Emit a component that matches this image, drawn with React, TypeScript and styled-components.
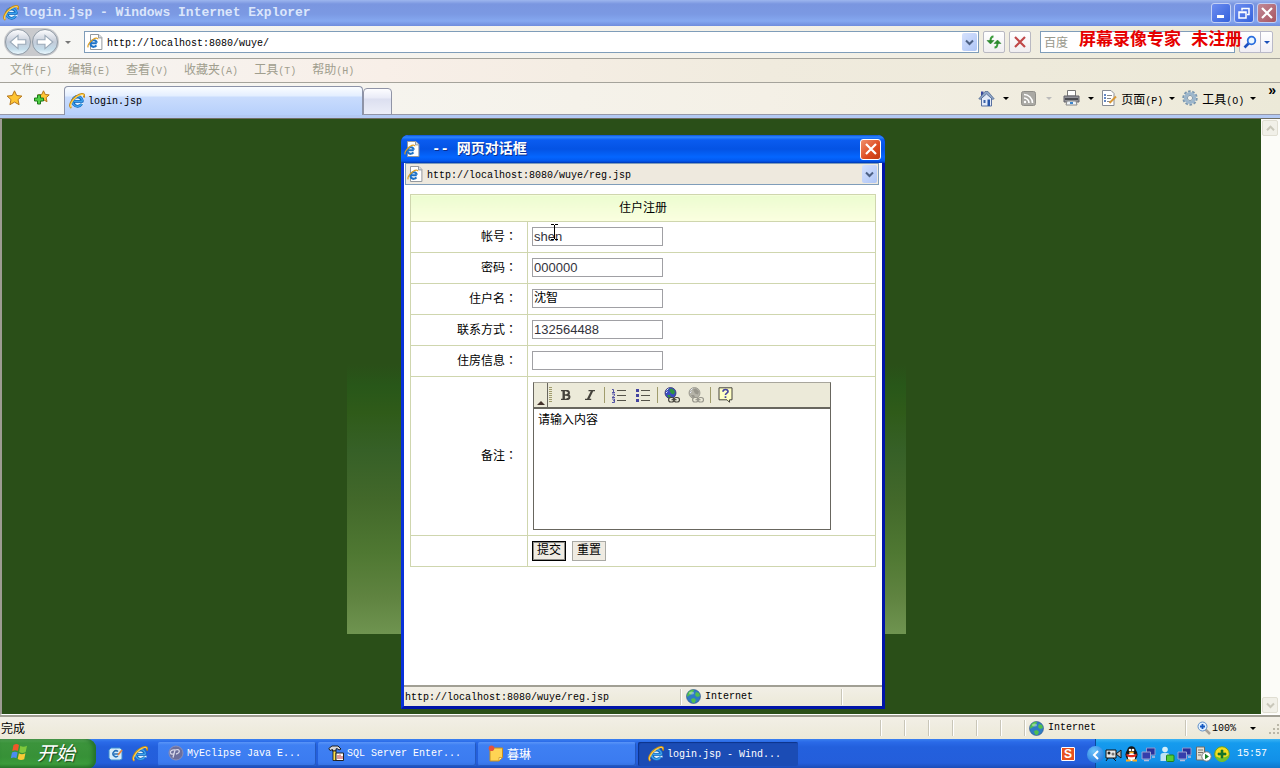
import React from "react";
import styled, { createGlobalStyle, css } from "styled-components";

const CJK = '"Noto Sans CJK SC", sans-serif';
const MONO = '"Liberation Mono", "Noto Sans CJK SC", monospace';

const GlobalStyle = createGlobalStyle`
  * { box-sizing: border-box; }
  body { margin: 0; font-family: ${CJK}; font-size: 12px; line-height: 16px; color: #000; }
  button, input, textarea { font-family: inherit; font-size: inherit; margin: 0; border-radius: 0; }
  button { padding: 0; border: 0; background: none; color: inherit; cursor: default; }
  a { color: inherit; text-decoration: none; }
  svg { display: block; flex: none; }
`;

/* ---------- shared parts ---------- */

const Latin = styled.span`
  font-family: ${MONO};
  font-size: 10px;
  white-space: nowrap;
`;

const Desktop = styled.div`
  display: flex;
  flex-direction: column;
  min-height: 100vh;
  background: #ece9d8;
`;

const TriangleDown = styled.span<{ $color?: string }>`
  flex: none;
  width: 0;
  height: 0;
  border: 3px solid transparent;
  border-top-color: ${(p) => p.$color ?? "#000"};
  border-bottom: 0;
`;

/* ---------- browser window ---------- */

const TitleBar = styled.header`
  display: flex;
  align-items: center;
  gap: 3px;
  height: 26px;
  padding: 0 3px;
  color: #dbe6fb;
  background: linear-gradient(#9db6ee 0, #7a96e0 4px, #7b99e3 14px, #85a8f0 21px, #6f8cdd 26px);
`;

const WindowTitle = styled.h1`
  flex: 1;
  margin: 0;
  font: bold 13px/16px ${MONO};
`;

const WindowButtons = styled.div`
  display: flex;
  gap: 3px;
`;

const WindowButton = styled.button<{ $kind?: "close" | "dialogClose" }>`
  display: grid;
  place-items: center;
  width: 20px;
  height: 20px;
  border: 1px solid #c3d0f5;
  border-radius: 3px;
  background: linear-gradient(135deg, #6d8df0, #3462dc);
  ${(p) =>
    p.$kind === "close" &&
    css`
      background: linear-gradient(135deg, #c18a97, #a85560);
    `}
  ${(p) =>
    p.$kind === "dialogClose" &&
    css`
      width: 21px;
      height: 21px;
      border-color: #fff;
      background: linear-gradient(135deg, #f0906c, #dd4a20 60%, #c23a12);
    `}
`;

const AddressRow = styled.div`
  display: flex;
  align-items: center;
  height: 33px;
  padding: 0 7px 0 4px;
  border-bottom: 1px solid #a5a39b;
  background: linear-gradient(90deg, #f6f6f4, #f4f1e8 60%, #ece9d8);
`;

const History = styled.nav`
  display: flex;
  align-items: center;
  gap: 6px;
  width: 80px;
`;

const HistoryButtons = styled.div`
  display: flex;
  gap: 1px;
  padding: 1px;
  border-radius: 14px;
  background: #c9cacd;
`;

const HistoryButton = styled.button`
  display: grid;
  place-items: center;
  width: 26px;
  height: 26px;
  border: 1px solid #8f9aa5;
  border-radius: 50%;
  background: linear-gradient(#fdfdfe, #c3cbd8 50%, #c4dcea 80%, #eefaff);
`;

const AddressBox = styled.div`
  display: flex;
  flex: 1;
  align-items: center;
  gap: 4px;
  height: 22px;
  padding: 1px 1px 1px 2px;
  border: 1px solid #7f9db9;
  background: #fff;
`;

const AddressInput = styled.input`
  flex: 1;
  min-width: 0;
  padding: 3px 0 0;
  border: 0;
  outline: 0;
  background: transparent;
  font: 10px/16px ${MONO};
`;

const DropButton = styled.button`
  display: grid;
  place-items: center;
  flex: none;
  width: 15px;
  height: 18px;
  border-radius: 2px;
  background: linear-gradient(135deg, #d5e1fd, #aec5f6);
`;

const ToolButton = styled.button<{ $gap: number }>`
  display: grid;
  place-items: center;
  width: 22px;
  height: 22px;
  margin-left: ${(p) => p.$gap}px;
  border: 1px solid #b9b9c2;
  border-radius: 2px;
  background: linear-gradient(#fff, #f0eef0);
`;

const SearchArea = styled.form`
  position: relative;
  display: flex;
  gap: 4px;
  margin-left: 9px;
`;

const SearchInput = styled.input`
  width: 195px;
  height: 22px;
  padding: 0 3px 2px;
  border: 1px solid #7f9db9;
  outline: 0;
  font-size: 12px;
  background: #fff;
  &::placeholder { color: #98988c; opacity: 1; }
`;

const SearchButtons = styled.div`
  display: flex;
  border: 1px solid #b9b9c8;
  border-radius: 2px;
  background: linear-gradient(#fff, #f0eef4);
`;

const SearchPart = styled.button<{ $w: number }>`
  display: grid;
  place-items: center;
  width: ${(p) => p.$w}px;
  & + & { border-left: 1px solid #b9b9c8; }
`;

const Watermark = styled.strong`
  position: absolute;
  top: 0;
  left: 39px;
  color: #e60000;
  font: bold 17px/20px ${MONO};
  white-space: nowrap;
  pointer-events: none;
`;

const MenuBar = styled.nav`
  display: flex;
  align-items: center;
  gap: 16px;
  height: 24px;
  padding-left: 10px;
  border-bottom: 1px solid #a5a39b;
  color: #a09e8e;
  background: linear-gradient(90deg, #f6f5f3, #f8efe8 30%, #f0ebde 60%, #ece9d8);
`;

const TabRow = styled.div`
  display: flex;
  align-items: flex-end;
  height: 32px;
  padding-right: 4px;
  background: linear-gradient(90deg, #f8f8f6, #f4f0e6 60%, #ece9d8);
  box-shadow: inset 0 -1px #9698a8;
`;

const Favorites = styled.div`
  display: flex;
  align-items: flex-start;
  gap: 10px;
  width: 64px;
  height: 32px;
  padding: 7px 0 0 6px;
`;

const Tab = styled.button`
  display: flex;
  align-items: center;
  gap: 3px;
  width: 299px;
  height: 29px;
  padding-left: 4px;
  border: 1px solid #8c93a8;
  border-bottom: 0;
  border-radius: 4px 4px 0 0;
  background: linear-gradient(#fbfdff 0, #e3eeff 9px, #c9dcfd 10px, #b7d0fb 100%);
`;

const NewTab = styled.button`
  width: 29px;
  height: 27px;
  border: 1px solid #9094a6;
  border-radius: 4px 4px 0 0;
  background: linear-gradient(#fdfdff, #e9ebf7 9px, #dcdff0 10px, #eceef8);
`;

const CommandBar = styled.div`
  display: flex;
  align-items: center;
  align-self: stretch;
  margin-left: auto;
`;

const Command = styled.button<{ $gap?: number; $after?: number }>`
  display: flex;
  align-items: center;
  gap: ${(p) => p.$gap ?? 8}px;
  margin-right: ${(p) => p.$after ?? 7}px;
  padding-bottom: 2px;
`;

const CommandName = styled.span`
  margin-right: 2px;
`;

const Overflow = styled.button`
  align-self: flex-start;
  margin-left: 4px;
  font: bold 14px/14px "Liberation Sans", sans-serif;
`;

const Strip = styled.div`
  height: 4px;
  border-bottom: 1px solid #716f64;
  background: #b3c9f3;
`;

/* ---------- page behind the dialog ---------- */

const Content = styled.main`
  position: relative;
  display: flex;
  flex: 1;
  border-left: 2px solid #9d9b92;
  border-bottom: 1px solid #fff;
  background: #2a4f18;
`;

const PageArea = styled.section`
  display: flex;
  flex: 1;
  justify-content: center;
  align-items: flex-start;
  padding: 245px 10px 80px 0;
`;

const Banner = styled.div`
  width: 559px;
  height: 270px;
  background: linear-gradient(#2a4f18, #285719 8%, #2f5b19 18%, #366027 32%, #42682a 50%, #4f7832 70%, #5f8340 86%, #6f9450);
`;

const ScrollBar = styled.div`
  display: flex;
  flex-direction: column;
  justify-content: space-between;
  width: 19px;
  padding: 1px 2px 1px 1px;
  background: #fcfcf8;
`;

const ScrollButton = styled.button`
  display: grid;
  place-items: center;
  width: 16px;
  height: 16px;
  border: 1px solid #e0ded2;
  border-radius: 2px;
  background: #f1f0e8;
`;

/* ---------- dialog ---------- */

const Dialog = styled.section`
  position: absolute;
  top: 16px;
  left: 399px;
  display: flex;
  flex-direction: column;
  width: 484px;
  border: solid #0831d9;
  border-width: 0 3px 3px;
  border-right-color: #0014a8;
  border-bottom-color: #0014a8;
  border-radius: 7px 7px 0 0;
  background: #fff;
`;

const DialogTitle = styled.header`
  display: flex;
  align-items: center;
  height: 28px;
  margin: 0 -3px;
  padding: 0 4px 0 3px;
  border-radius: 7px 7px 0 0;
  color: #fff;
  background: linear-gradient(#0a52d8 0, #2d86ff 2px, #0a5cf0 5px, #0453e4 14px, #0466ff 22px, #0358ee 26px, #0036b0 28px);
`;

const DialogName = styled.h2`
  display: flex;
  flex: 1;
  gap: 8px;
  margin: 0 0 0 12px;
  font: bold 14px/16px ${MONO};
  text-shadow: 1px 1px #0a2f8f;
`;

const DialogAddress = styled(AddressBox)`
  flex: none;
  margin: 0 3px 0 1px;
  padding: 1px;
  background: #eee9de;
`;

const DialogBody = styled.div`
  min-height: 500px;
  padding: 9px 6px 0;
`;

const FormTable = styled.table`
  width: 100%;
  border-collapse: collapse;
  th, td { border: 1px solid #cfd6ae; padding: 0; font-weight: normal; }
  th { padding-bottom: 3px; }
`;

const Caption = styled.th`
  height: 27px;
  background: linear-gradient(#ecfcd0, #fbffe0);
`;

const Row = styled.tr<{ $h: number }>`
  height: ${(p) => p.$h}px;
`;

const LabelCell = styled.th`
  width: 117px;
  text-align: right;
  label { margin-right: 10px; }
`;

const Colon = styled.span`
  font-family: "Noto Sans CJK TC", sans-serif;
`;

const FieldCell = styled.td<{ $raised?: boolean }>`
  position: relative;
  && {
    padding-left: 4px;
    padding-bottom: ${(p) => (p.$raised ? 2 : 0)}px;
  }
`;

const Field = styled.input<{ $cjk?: boolean }>`
  display: block;
  width: 131px;
  height: 19px;
  padding: 0 1px;
  border: 1px solid #a0a0a4;
  outline: 0;
  color: #33333c;
  font: 13px/17px "Liberation Sans", sans-serif;
  ${(p) =>
    p.$cjk &&
    css`
      padding-bottom: 4px;
      font: 12px/13px ${CJK};
      color: #000;
    `}
`;

const Caret = styled.svg`
  position: absolute;
  top: 2px;
  left: 23px;
`;

const Editor = styled.div`
  width: 298px;
  margin-left: 1px;
  border: 1px solid #68665e;
  border-top-color: #a8a69c;
`;

const EditorBar = styled.div`
  display: flex;
  align-items: center;
  height: 26px;
  border-bottom: 2px solid #68665e;
  background: #ecead9;
`;

const Expand = styled.button`
  display: flex;
  align-items: flex-end;
  justify-content: center;
  width: 14px;
  height: 24px;
  padding-bottom: 2px;
  border-right: 1px solid #68665e;
`;

const Grip = styled.span`
  width: 3px;
  height: 16px;
  margin: 0 2px 0 1px;
  background: repeating-linear-gradient(#a09c6c 0 1px, transparent 1px 2px);
`;

const EditorTool = styled.button`
  display: grid;
  place-items: center;
  width: 24px;
  height: 22px;
`;

const Divider = styled.span`
  width: 1px;
  height: 16px;
  margin: 0 2px;
  background: #a09c6c;
`;

const EditorText = styled.textarea`
  display: block;
  width: 100%;
  height: 120px;
  padding: 2px 4px;
  border: 0;
  outline: 0;
  resize: none;
  font: 12px/16px ${CJK};
`;

const Actions = styled.div`
  display: flex;
  gap: 6px;
`;

const FormButton = styled.button<{ $primary?: boolean }>`
  display: flex;
  justify-content: center;
  align-items: flex-start;
  width: 34px;
  height: 20px;
  border: 1px solid #a9a9a4;
  background: #efebe2;
  font-size: 12px;
  line-height: 14px;
  ${(p) =>
    p.$primary &&
    css`
      border-color: #000;
      box-shadow: inset 0 0 0 1px #8d8d88;
    `}
`;

/* ---------- status bars ---------- */

const StatusBar = styled.footer<{ $h: number }>`
  display: flex;
  align-items: center;
  height: ${(p) => p.$h}px;
  border-top: 2px solid #a19f94;
  background: linear-gradient(#f2efe6, #ece9d8);
`;

const StatusText = styled.div`
  flex: 1;
  padding-left: 1px;
`;

const StatusCell = styled.div<{ $w: number; $pad?: number }>`
  display: flex;
  align-items: center;
  gap: 4px;
  width: ${(p) => p.$w}px;
  height: 16px;
  padding-left: ${(p) => p.$pad ?? 0}px;
  border-left: 1px solid #c9c6b8;
  box-shadow: inset 1px 0 #fff;
`;

const Zoom = styled.button`
  display: flex;
  align-items: center;
  gap: 1px;
  margin-right: 10px;
`;

/* ---------- task bar ---------- */

const TaskBar = styled.nav`
  display: flex;
  height: 30px;
  background: linear-gradient(#3a80f0 0, #2a6ae8 3px, #2360dd 8px, #245edb 24px, #1a48b0 30px);
`;

const Start = styled.button`
  display: flex;
  align-items: center;
  gap: 8px;
  width: 96px;
  padding: 0 0 4px 10px;
  border-radius: 0 9px 9px 0;
  color: #fff;
  font: italic 19px/24px ${CJK};
  text-shadow: 1px 1px 1px #1c4a1c;
  background: linear-gradient(#5fae5f 0, #3c943c 4px, #379137 18px, #3b9b3b 25px, #267026 30px);
  box-shadow: inset -3px 0 4px #23702a;
`;

const QuickLaunch = styled.div`
  display: flex;
  align-items: center;
  gap: 8px;
  width: 62px;
  padding-left: 12px;
`;

const Tasks = styled.div`
  display: flex;
  flex: 1;
  gap: 2px;
  padding: 3px 0;
`;

const Task = styled.button<{ $active?: boolean }>`
  display: flex;
  align-items: center;
  gap: 3px;
  flex: 0 1 158px;
  min-width: 0;
  padding: 0 0 2px 10px;
  border-radius: 2px;
  color: #fff;
  background: linear-gradient(#5a95f8 0, #3f80f3 3px, #3b7bf0 20px, #3470e0);
  box-shadow: inset -1px -1px #2459c0;
  ${(p) =>
    p.$active &&
    css`
      flex-basis: 160px;
      padding-bottom: 0;
      background: #1b4cb5;
      box-shadow: inset 1px 1px 1px #0d338a;
    `}
`;

const InputMethod = styled.button`
  display: grid;
  place-items: center;
  width: 14px;
  height: 14px;
  margin: 8px 20px 0 0;
  border: 1px solid #fff;
  border-radius: 1px;
  color: #fff;
  background: #e8511f;
  font: bold 12px/12px "Liberation Sans", sans-serif;
`;

const Tray = styled.div`
  position: relative;
  display: flex;
  align-items: center;
  gap: 2px;
  width: 185px;
  padding-left: 9px;
  border-left: 1px solid #0a4a9c;
  color: #fff;
  background: linear-gradient(#3cb4f4 0, #159bee 4px, #1290e8 22px, #0f74c8 30px);
`;

const TrayToggle = styled.button`
  position: absolute;
  top: 7px;
  left: -9px;
  display: grid;
  place-items: center;
  width: 17px;
  height: 17px;
  border-radius: 50%;
  background: radial-gradient(circle at 40% 30%, #6cc4fa, #1668d8);
`;

const Clock = styled.time`
  margin-left: 5px;
  font: 10px/16px ${MONO};
`;

/* ---------- drawings ---------- */

const IeLogo = ({ size = 16 }: { size?: number }) => (
  <svg width={size} height={size} viewBox="0 0 16 16" fill="none">
    <circle cx="8.500" cy="8.300" r="6" fill="#1668bc" />
    <path d="M6 7c.6-2 4.400-2 5 0zM6 9.800h8.500v1.700h-4c-1.500 1-4.200.5-4.500-1.700z" fill="#e4f2fc" />
    <path d="M13.400 8.300H5M12.800 10.900A5 5 0 1 1 13.500 8.300" stroke="#1b6fc4" strokeWidth="2.600" />
    <path d="M13.400 8.300H5M12.800 10.900A5 5 0 1 1 13.500 8.300" stroke="#3fa5ee" strokeWidth="1.300" />
    <path d="M2.400 14.800C-.8 13.200 2 7 7.400 3.200 11.400.4 15.200.2 15.200 2.600c0 .8-.2 1.300-.5 1.900" stroke="#c58a16" strokeWidth="1.900" />
    <path d="M2.300 14.300C.2 12.700 2.900 7.200 7.700 3.700 11.400 1 14.500.8 14.800 2.700" stroke="#ffd14f" strokeWidth="1.200" />
  </svg>
);

const IePage = () => (
  <svg width="16" height="16" viewBox="0 0 16 16" fill="none">
    <path d="M3.500.5h8.400l3 3v12H3.500z" fill="#fff" stroke="#94999e" />
    <path d="M11.500.5v3.400h3.400" fill="#dfe3e6" stroke="#94999e" />
    <path d="M9.800 9.300H4.400M9.400 11.400a3.300 3.300 0 1 1 .5-2.600" stroke="#1d72c8" strokeWidth="2.100" />
    <path d="M1.300 13.400C0 12 2.400 7.800 6 5.400c2.600-1.700 4.900-1.700 4.800-.2" stroke="#e0a020" strokeWidth="1.200" />
  </svg>
);

const Chevron = ({ up, color = "#4d6185" }: { up?: boolean; color?: string }) => (
  <svg width="9" height="7" viewBox="0 0 9 7" fill="none" stroke={color} strokeWidth="2">
    <path d={up ? "M1 5.200 4.500 1.700 8 5.200" : "M1 1.500 4.500 5 8 1.500"} />
  </svg>
);

const Arrow = ({ right }: { right?: boolean }) => (
  <svg width="20" height="18" viewBox="0 0 18 16">
    <path
      d={right ? "M9 2l7 6-7 6v-4H2V6h7z" : "M9 2 2 8l7 6v-4h7V6H9z"}
      fill="#fff"
      stroke="#9aa9b8"
      strokeWidth="1"
    />
  </svg>
);

const Cross = ({ color, size = 14 }: { color: string; size?: number }) => (
  <svg width={size} height={size} viewBox="0 0 14 14" stroke={color} strokeWidth="2.2">
    <path d="M2 2l10 10M12 2 2 12" />
  </svg>
);

const Refresh = () => (
  <svg width="16" height="16" viewBox="0 0 16 16" fill="none">
    <path d="M7.500 2.500C5.500 2.500 4.500 4 4.500 7M8.500 13.500c2 0 3-1.500 3-4.500" stroke="#3a9a3a" strokeWidth="2" />
    <path d="M1 6.500h7L4.500 10zM8 9.500h7L11.500 6z" fill="#2c8c2c" stroke="#1f7a24" strokeWidth=".5" />
  </svg>
);

const Lens = ({ plus }: { plus?: boolean }) => (
  <svg width="14" height="14" viewBox="0 0 14 14" fill="none">
    {plus ? (
      <>
        <path d="M8 8l5 5" stroke="#a9a39a" strokeWidth="2.5" />
        <circle cx="5.500" cy="5.500" r="4.500" fill="#e0f0ff" stroke="#5f8fc8" />
        <path d="M5.500 3v5M3 5.500h5" stroke="#1458c0" strokeWidth="1.800" />
      </>
    ) : (
      <>
        <path d="M6 8 1.500 12.500" stroke="#1c50c0" strokeWidth="2.600" />
        <circle cx="8.500" cy="5.500" r="3.800" fill="#eaf6ff" stroke="#2a6ede" strokeWidth="1.800" />
      </>
    )}
  </svg>
);

const Star = ({ add }: { add?: boolean }) => (
  <svg width="17" height="16" viewBox="0 0 17 16">
    <path
      d={add ? "M10.500.8l1.700 3.600 4 .5-3 2.800.8 4-3.500-2-3.500 2 .8-4-3-2.800 4-.5z" : "M8.500.8l2.200 4.700 5.200.6-3.900 3.500 1.100 5.100-4.600-2.600-4.600 2.600L5 9.600 1.100 6.100l5.200-.6z"}
      fill="#ffc533"
      stroke="#b5761c"
    />
    {add && <path d="M4.500 5h3v3h3v3h-3v3h-3v-3h-3V8h3z" fill="#4fd044" stroke="#1f7a1c" />}
  </svg>
);

const Home = () => (
  <svg width="17" height="17" viewBox="0 0 17 17">
    <path d="M3 1.500h2.500V7H3z" fill="#3848a0" />
    <path d="M3.500 8l5-5.500L13.500 8v8h-10z" fill="#e4ebf8" stroke="#5870a0" />
    <path d="M.8 8.800 7 1.500h3l6.200 7.300-1.500.6L8.500 4 2.300 9.400z" fill="#8fa5c8" stroke="#4a648c" strokeWidth=".7" />
    <path d="M5.500 10h2v3h-2z" fill="#3b62a8" />
    <path d="M9.500 9.500h2.500V16H9.500z" fill="#2856a8" />
  </svg>
);

const Feed = () => (
  <svg width="15" height="15" viewBox="0 0 15 15" fill="none">
    <rect x=".5" y=".5" width="14" height="14" rx="2" fill="#aaa9a4" stroke="#8f8e89" />
    <path d="M3 7a5 5 0 0 1 5 5M3 3.500A8.500 8.500 0 0 1 11.500 12" stroke="#fff" strokeWidth="1.600" />
    <circle cx="4" cy="11" r="1.200" fill="#fff" />
  </svg>
);

const Printer = () => (
  <svg width="17" height="16" viewBox="0 0 17 16">
    <path d="M4.500.5h8V6h-8z" fill="#fff" stroke="#777" />
    <path d="M1 6h15v6H1z" fill="#92939a" stroke="#62636a" />
    <path d="M2 8h13v2H2z" fill="#4b4c52" />
    <path d="M4 11h9l1 4H3z" fill="#eef4fa" stroke="#888" />
    <path d="M7 12h3v2H7z" fill="#3c86cc" />
  </svg>
);

const PageIcon = () => (
  <svg width="16" height="16" viewBox="0 0 16 16" fill="none">
    <path d="M1.500.5h8.500l3 3v12H1.500z" fill="#fff" stroke="#888c94" />
    <path d="M3 5h2M3 8h2M3 11h2" stroke="#3060b0" strokeWidth="1.500" />
    <path d="M6 5.500h5M6 8.500h4M6 11.500h3" stroke="#888" />
    <path d="M8.500 13 15 6.500" stroke="#d89838" strokeWidth="2" />
  </svg>
);

const Gear = () => (
  <svg width="16" height="16" viewBox="0 0 16 16" fill="none">
    <circle cx="8" cy="8" r="6.700" stroke="#7a97b0" strokeWidth="2" strokeDasharray="2.600 1.600" />
    <circle cx="8" cy="8" r="4.500" stroke="#9cb6cc" strokeWidth="3.200" />
    <circle cx="8" cy="8" r="2.600" fill="#f3f0e8" stroke="#6888a4" strokeWidth=".8" />
  </svg>
);

const Globe = () => (
  <svg width="15" height="15" viewBox="0 0 15 15">
    <circle cx="7.500" cy="7.500" r="7" fill="#2f7cc4" stroke="#2b4f88" strokeWidth=".6" />
    <path d="M3 2.500C5 .5 7 .5 8 1c0 2-2 2-2.500 4-1 1-2.500 1-4 3C.5 6 1.500 4 3 2.500zM10 3l3 1 1 3-3 1-2-2zM5 10l3-1 2 2-1.500 3L6 13.500z" fill="#52bf4c" />
    <ellipse cx="5.500" cy="4" rx="2.600" ry="1.600" fill="#fff" opacity=".4" />
  </svg>
);

const NumberList = () => (
  <svg width="16" height="15" viewBox="0 0 16 15" fill="none">
    <path d="M6 2.500h9M6 7.500h9M6 12.500h9" stroke="#55534a" />
    <path d="M1 1.500h1.500V4M1 4.500h3M1 6h2.500v1.500L1 9.500h3M1 11h2.500v3.500H1M2 12.700h1.500" stroke="#4444a0" strokeWidth=".9" />
  </svg>
);

const BulletList = () => (
  <svg width="16" height="15" viewBox="0 0 16 15">
    <path d="M6 2.500h9M6 7.500h9M6 12.500h9" stroke="#55534a" />
    <path d="M1 1h3v3H1zM1 6h3v3H1zM1 11h3v3H1z" fill="#4444a0" />
  </svg>
);

const LinkGlobe = ({ off }: { off?: boolean }) => (
  <svg width="16" height="16" viewBox="0 0 16 16" fill="none">
    <circle cx="6.500" cy="6" r="5.500" fill={off ? "#b5b3a8" : "#3a4cc0"} stroke={off ? "#96948a" : "#33366e"} strokeWidth=".8" />
    <path d="M5 2.500l3-1 3 3-1 3-3-1zM3 8l3 0 1 2-2 1z" fill={off ? "#98968c" : "#2f9440"} />
    <path d="M2.500 3.500l2-2M2 6l1.500-1.500" stroke="#e8ecf8" />
    <g stroke={off ? "#98968c" : "#45433c"} strokeWidth="1.200" fill="#ecead9">
      <rect x="4.600" y="10.500" width="5.500" height="4.500" rx="2.200" />
      <rect x="10" y="10.500" width="5.500" height="4.500" rx="2.200" />
      <path d="M7.500 12.700h5" />
    </g>
  </svg>
);

const Help = () => (
  <svg width="15" height="16" viewBox="0 0 15 16" fill="none">
    <path d="M1 .8h13v12h-2.500v2.500L9 12.800H1z" fill="#ffffc4" stroke="#45433c" />
    <path d="M5 4.800c0-3 5-3 5-.3 0 1.800-2.500 1.500-2.500 3.500M7.500 9.200v1.800" stroke="#4444a0" strokeWidth="1.700" />
  </svg>
);

const Bold = () => (
  <svg width="10" height="10" viewBox="0 0 10 10" fill="none" stroke="#45433c">
    <path d="M0 .7h6M0 9.300h6M2.700 5h4" strokeWidth="1.300" />
    <path d="M2.700.5v9" strokeWidth="2.400" />
    <path d="M5.500.8c3.300 0 3.300 4 0 4.100 4 0 4 4.300 0 4.300" strokeWidth="2" />
  </svg>
);

const Italic = () => (
  <svg width="10" height="10" viewBox="0 0 10 10" stroke="#45433c">
    <path d="M3.500.7H10M0 9.300h6.200" strokeWidth="1.300" />
    <path d="M7.200.7 3 9.300" strokeWidth="2.200" />
  </svg>
);

const Flag = () => (
  <svg width="19" height="18" viewBox="0 0 19 18">
    <path d="M3.500 2c2.500-1.500 4-1 5.500 0L7.800 8C6 7 4.500 7 2.300 8z" fill="#f0582a" />
    <path d="M10.300 2.700c2 1.300 4 1.300 6.700 0L15.700 9c-2.500 1.300-4.500 1.200-6.500 0z" fill="#7fc83c" />
    <path d="M2 9.500c2.300-1.300 4-1 5.600 0l-1.200 5.800C4.500 14.300 3 14.300.8 15.300z" fill="#4b8cf0" />
    <path d="M8.900 10.300c2 1.200 4 1.200 6.500 0l-1.200 6c-2.400 1.200-4.500 1-6.500-.2z" fill="#f8ca36" />
  </svg>
);

const ShowDesktop = () => (
  <svg width="16" height="16" viewBox="0 0 16 16" fill="none">
    <path d="M3 2h9l2 2v9l-2 1H3l-2-2V4z" fill="#d5ecfa" stroke="#3f8ed0" />
    <path d="M10 5.500a3 3 0 1 0 0 4.500M6 8h5" stroke="#2470b8" strokeWidth="1.500" />
    <path d="M10 9l4-5" stroke="#e8843c" strokeWidth="1.700" />
  </svg>
);

const Eclipse = () => (
  <svg width="16" height="16" viewBox="0 0 16 16" fill="none">
    <circle cx="8" cy="8" r="7" fill="#6c6f9c" stroke="#8d90b8" />
    <path d="M5 12.500 7 5c5-2 6 3 1 4M7 5c-3-.5-5 1-4.500 3 .5 1.500 2.500 1.500 3.500.5" stroke="#d5d6e8" strokeWidth="1.300" />
  </svg>
);

const SqlTool = () => (
  <svg width="16" height="16" viewBox="0 0 16 16">
    <path d="M.8 3.500 4 1h6l3 3-2 1-1.500-1.200H8V6H4.500V4.500L2 5.500z" fill="#d7d7d7" stroke="#111" strokeWidth=".9" />
    <path d="M5 6h3v9.500H5z" fill="#ffe24a" stroke="#111" strokeWidth=".8" />
    <path d="M8 8h7.500v7.500H8z" fill="#fff" stroke="#222" />
    <path d="M10 10v4M12 9.500V14M14 11v3" stroke="#b33" />
  </svg>
);

const Note = () => (
  <svg width="16" height="17" viewBox="0 0 16 17">
    <path d="M2 3h12.500v9.500L11 16H2z" fill="#ffd454" stroke="#c48e22" />
    <path d="M11 16v-3.500h3.500z" fill="#fff0b0" stroke="#c48e22" strokeWidth=".7" />
    <circle cx="3.500" cy="3.300" r="2.800" fill="#e4533e" />
  </svg>
);

const Camera = () => (
  <svg width="17" height="15" viewBox="0 0 17 15">
    <path d="M1 3h10v8H1z" fill="#e8e8e8" stroke="#111" />
    <path d="M11 7l5-4v8zM3 11l-2 3M8 11l3 3" fill="#bbb" stroke="#111" />
    <circle cx="4" cy="6" r="1.500" fill="#222" />
    <circle cx="8" cy="7" r="1.500" fill="#777" />
  </svg>
);

const Penguin = () => (
  <svg width="15" height="16" viewBox="0 0 15 16">
    <ellipse cx="7.500" cy="8.500" rx="6" ry="6.500" fill="#151515" />
    <circle cx="7.500" cy="4.500" r="4.200" fill="#151515" />
    <ellipse cx="7.500" cy="11" rx="3.700" ry="4" fill="#fff" />
    <path d="M2.500 7.500c3 2 7 2 10 0v2.500c-3 1.800-7 1.800-10 0z" fill="#e32b20" />
    <circle cx="6" cy="4" r="1.300" fill="#fff" />
    <circle cx="9" cy="4" r="1.300" fill="#fff" />
    <ellipse cx="7.500" cy="6.300" rx="2.500" ry=".9" fill="#ffad1f" />
    <path d="M2 14.500h4.500M8.500 14.500H13" stroke="#ffad1f" strokeWidth="2" />
  </svg>
);

const Network = () => (
  <svg width="16" height="15" viewBox="0 0 16 15">
    <path d="M5.500 1h8.500v7H5.500z" fill="#28309a" stroke="#8f98cc" />
    <path d="M1 5h8.500v7H1z" fill="#343eac" stroke="#9aa3d4" />
    <path d="M3 13.500h5M11 10h3" stroke="#b8bedc" strokeWidth="1.400" />
  </svg>
);

const Messenger = () => (
  <svg width="16" height="16" viewBox="0 0 16 16">
    <circle cx="6" cy="3.500" r="2.800" fill="#d4eef8" />
    <path d="M1.500 15V9c0-3 9-3 9 0v6z" fill="#bfe3f4" />
    <rect x="7.500" y="9" width="7.500" height="6.500" rx="1" fill="#55cc35" stroke="#1e801c" />
  </svg>
);

const Server = () => (
  <svg width="17" height="16" viewBox="0 0 17 16">
    <path d="M1.500 1h8v13h-8z" fill="#e2dfd5" stroke="#6f6c64" />
    <path d="M3 4h5M3 6.500h5M3 9h3" stroke="#77746c" />
    <circle cx="11.500" cy="10.500" r="4.700" fill="#fff" stroke="#777" />
    <path d="M10 7.800v5.400l4-2.700z" fill="#178028" />
  </svg>
);

const Shield = () => (
  <svg width="16" height="16" viewBox="0 0 16 16">
    <circle cx="8" cy="8" r="7.300" fill="#f4dd1e" stroke="#68a020" />
    <path d="M1.500 10a6.500 6.500 0 0 0 13-1c-3 3-9 4-13 1z" fill="#70c030" />
    <path d="M7 4h2v3h3v2H9v3H7V9H4V7h3z" fill="#167428" stroke="#167428" strokeWidth=".6" />
  </svg>
);

const SizeGrip = () => (
  <svg width="13" height="13" viewBox="0 0 13 13" fill="#bab7a8">
    <path d="M10 2h2v2h-2zM6 6h2v2H6zM10 6h2v2h-2zM2 10h2v2H2zM6 10h2v2H6zM10 10h2v2h-2z" />
  </svg>
);

/* ---------- data ---------- */

const menus = [
  ["文件", "(F)"],
  ["编辑", "(E)"],
  ["查看", "(V)"],
  ["收藏夹", "(A)"],
  ["工具", "(T)"],
  ["帮助", "(H)"],
];

const fields = [
  { id: "account", label: "帐号", value: "shen" },
  { id: "password", label: "密码", value: "000000" },
  { id: "resident", label: "住户名", value: "沈智", cjk: true },
  { id: "contact", label: "联系方式", value: "132564488" },
  { id: "house", label: "住房信息", value: "" },
];

const RegisterDialog = () => (
  <Dialog role="dialog" aria-label="网页对话框">
    <DialogTitle>
      <IePage />
      <DialogName>
        <span>--</span>
        <span>网页对话框</span>
      </DialogName>
      <WindowButton $kind="dialogClose" aria-label="关闭">
        <Cross color="#fff" />
      </WindowButton>
    </DialogTitle>
    <DialogAddress>
      <IePage />
      <AddressInput aria-label="地址" readOnly value="http://localhost:8080/wuye/reg.jsp" />
      <DropButton aria-label="展开">
        <Chevron />
      </DropButton>
    </DialogAddress>
    <DialogBody>
      <FormTable>
        <thead>
          <tr>
            <Caption colSpan={2}>住户注册</Caption>
          </tr>
        </thead>
        <tbody>
          {fields.map((f) => (
            <Row key={f.id} $h={31}>
              <LabelCell>
                <label htmlFor={f.id}>{f.label}<Colon>：</Colon></label>
              </LabelCell>
              <FieldCell $raised>
                <Field id={f.id} defaultValue={f.value} $cjk={f.cjk} />
                {f.id === "account" && (
                  <Caret width="7" height="16" viewBox="0 0 7 16" stroke="#000" fill="none">
                    <path d="M0 .5h3M4 .5h3M3.500 1v14M0 15.500h3M4 15.500h3" />
                  </Caret>
                )}
              </FieldCell>
            </Row>
          ))}
          <Row $h={159}>
            <LabelCell>
              <label htmlFor="remark">备注<Colon>：</Colon></label>
            </LabelCell>
            <FieldCell>
              <Editor>
                <EditorBar>
                  <Expand aria-label="收起">
                    <svg width="8" height="4" viewBox="0 0 8 4">
                      <path d="M0 4l4-4 4 4z" fill="#45332c" />
                    </svg>
                  </Expand>
                  <Grip />
                  <EditorTool aria-label="粗体"><Bold /></EditorTool>
                  <EditorTool aria-label="斜体"><Italic /></EditorTool>
                  <Divider />
                  <EditorTool aria-label="编号列表"><NumberList /></EditorTool>
                  <EditorTool aria-label="项目列表"><BulletList /></EditorTool>
                  <Divider />
                  <EditorTool aria-label="插入链接"><LinkGlobe /></EditorTool>
                  <EditorTool aria-label="取消链接"><LinkGlobe off /></EditorTool>
                  <Divider />
                  <EditorTool aria-label="帮助"><Help /></EditorTool>
                </EditorBar>
                <EditorText id="remark" defaultValue="请输入内容" />
              </Editor>
            </FieldCell>
          </Row>
          <Row $h={31}>
            <LabelCell />
            <FieldCell>
              <Actions>
                <FormButton $primary type="submit">提交</FormButton>
                <FormButton type="reset">重置</FormButton>
              </Actions>
            </FieldCell>
          </Row>
        </tbody>
      </FormTable>
    </DialogBody>
    <StatusBar $h={21}>
      <StatusText>
        <Latin>http://localhost:8080/wuye/reg.jsp</Latin>
      </StatusText>
      <StatusCell $w={161} $pad={5}>
        <Globe />
        <Latin>Internet</Latin>
      </StatusCell>
      <StatusCell $w={41} />
    </StatusBar>
  </Dialog>
);

const Browser = () => (
  <>
    <TitleBar>
      <IeLogo />
      <WindowTitle>login.jsp - Windows Internet Explorer</WindowTitle>
      <WindowButtons>
        <WindowButton aria-label="最小化">
          <svg width="12" height="12"><path d="M2 8h7v3H2z" fill="#fff" /></svg>
        </WindowButton>
        <WindowButton aria-label="还原">
          <svg width="12" height="12" fill="none" stroke="#fff" strokeWidth="1.5">
            <path d="M4 3.500V1.500h7v6H9M1 5h7v6H1zM1 5.500h7" />
          </svg>
        </WindowButton>
        <WindowButton $kind="close" aria-label="关闭">
          <Cross color="#fff" />
        </WindowButton>
      </WindowButtons>
    </TitleBar>
    <AddressRow>
      <History>
        <HistoryButtons>
          <HistoryButton aria-label="后退"><Arrow /></HistoryButton>
          <HistoryButton aria-label="前进"><Arrow right /></HistoryButton>
        </HistoryButtons>
        <TriangleDown $color="#777" />
      </History>
      <AddressBox>
        <IePage />
        <AddressInput aria-label="地址" defaultValue="http://localhost:8080/wuye/" />
        <DropButton aria-label="展开"><Chevron /></DropButton>
      </AddressBox>
      <ToolButton $gap={4} aria-label="刷新"><Refresh /></ToolButton>
      <ToolButton $gap={4} aria-label="停止"><Cross color="#c04848" /></ToolButton>
      <SearchArea>
        <SearchInput aria-label="搜索" placeholder="百度" />
        <SearchButtons>
          <SearchPart $w={20} type="button" aria-label="搜索"><Lens /></SearchPart>
          <SearchPart $w={12} type="button" aria-label="选项"><TriangleDown $color="#1a50b8" /></SearchPart>
        </SearchButtons>
        <Watermark>屏幕录像专家 未注册</Watermark>
      </SearchArea>
    </AddressRow>
    <MenuBar>
      {menus.map(([name, key]) => (
        <a href="#" key={name}>
          {name}
          <Latin>{key}</Latin>
        </a>
      ))}
    </MenuBar>
    <TabRow>
      <Favorites>
        <button aria-label="收藏中心"><Star /></button>
        <button aria-label="添加到收藏夹"><Star add /></button>
      </Favorites>
      <Tab>
        <IeLogo />
        <Latin>login.jsp</Latin>
      </Tab>
      <NewTab aria-label="新选项卡" />
      <CommandBar>
        <Command aria-label="主页" $after={12}><Home /><TriangleDown /></Command>
        <Command aria-label="源" $gap={10} $after={11}><Feed /><TriangleDown $color="#bbb" /></Command>
        <Command aria-label="打印"><Printer /><TriangleDown /></Command>
        <Command $gap={4}>
          <PageIcon />
          <CommandName>页面<Latin>(P)</Latin></CommandName>
          <TriangleDown />
        </Command>
        <Command $gap={4} $after={8}>
          <Gear />
          <CommandName>工具<Latin>(O)</Latin></CommandName>
          <TriangleDown />
        </Command>
        <Overflow aria-label="更多">»</Overflow>
      </CommandBar>
    </TabRow>
    <Strip />
    <Content>
      <PageArea>
        <Banner />
      </PageArea>
      <ScrollBar>
        <ScrollButton aria-label="向上"><Chevron up color="#c9c7ba" /></ScrollButton>
        <ScrollButton aria-label="向下"><Chevron color="#c9c7ba" /></ScrollButton>
      </ScrollBar>
      <RegisterDialog />
    </Content>
    <StatusBar $h={24}>
      <StatusText>完成</StatusText>
      {[24, 24, 24, 24, 24, 24].map((w, i) => (
        <StatusCell key={i} $w={w} />
      ))}
      <StatusCell $w={161} $pad={4}>
        <Globe />
        <Latin>Internet</Latin>
      </StatusCell>
      <StatusCell $w={82} $pad={11}>
        <Zoom><Lens plus /><Latin>100%</Latin></Zoom>
        <TriangleDown />
      </StatusCell>
      <SizeGrip />
    </StatusBar>
  </>
);

const App = () => (
  <Desktop>
    <GlobalStyle />
    <Browser />
    <TaskBar>
      <Start><Flag />开始</Start>
      <QuickLaunch>
        <button aria-label="显示桌面"><ShowDesktop /></button>
        <button aria-label="浏览器"><IeLogo /></button>
      </QuickLaunch>
      <Tasks>
        <Task><Eclipse /><Latin>MyEclipse Java E...</Latin></Task>
        <Task><SqlTool /><Latin>SQL Server Enter...</Latin></Task>
        <Task><Note />暮琳</Task>
        <Task $active><IeLogo /><Latin>login.jsp - Wind...</Latin></Task>
      </Tasks>
      <InputMethod aria-label="输入法">S</InputMethod>
      <Tray>
        <TrayToggle aria-label="显示隐藏的图标">
          <svg width="8" height="10" fill="none" stroke="#fff" strokeWidth="2"><path d="M6 1 2 5l4 4" /></svg>
        </TrayToggle>
        <Camera />
        <Penguin />
        <Network />
        <Messenger />
        <Network />
        <Server />
        <Shield />
        <Clock>15:57</Clock>
      </Tray>
    </TaskBar>
  </Desktop>
);

export default App;
